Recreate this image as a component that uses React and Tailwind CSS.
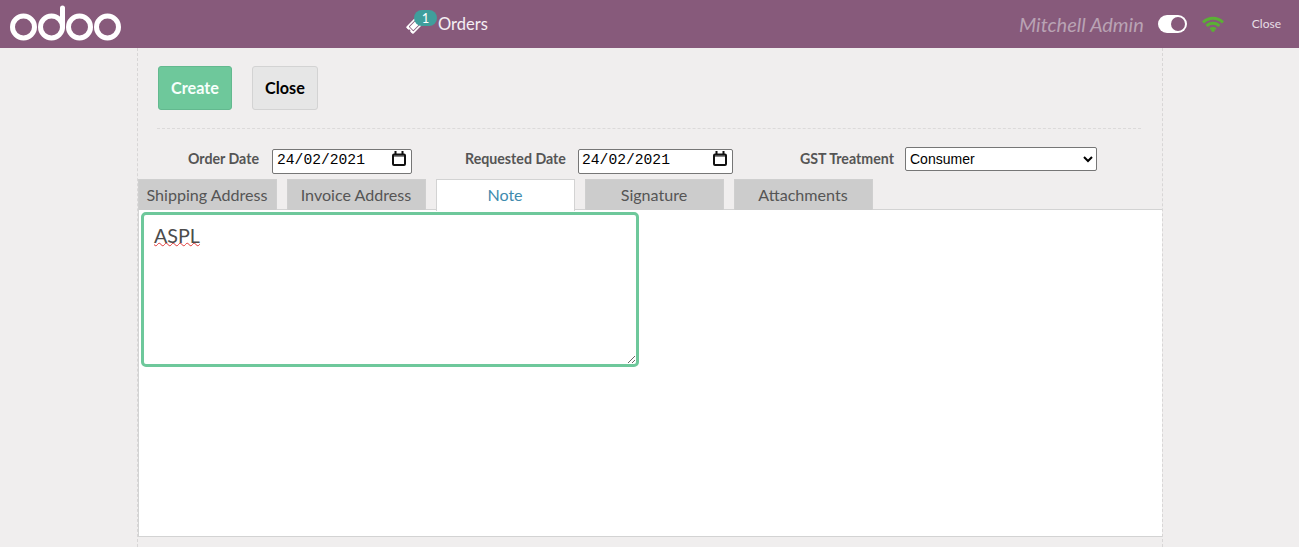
import React from "react";
import { FaTicketAlt } from "react-icons/fa";

function Logo() {
  return (
    <svg width="112" height="36" viewBox="0 0 112 36" fill="none" stroke="white" strokeWidth="5">
      <circle cx="13.5" cy="22" r="11" />
      <circle cx="41.5" cy="22" r="11" />
      <path d="M52.5 22V3" strokeLinecap="round" />
      <circle cx="69.5" cy="22" r="11" />
      <circle cx="97.5" cy="22" r="11" />
    </svg>
  );
}

function Wifi() {
  return (
    <svg className="ml-[15px] mt-[-1px]" width="22" height="16" viewBox="0 0 22 16" fill="none" stroke="#5bb035" strokeWidth="3">
      <path d="M1 6.5A14 14 0 0 1 21 6.5" />
      <path d="M4.6 10A9 9 0 0 1 17.4 10" />
      <path d="M8.2 13.2A4 4 0 0 1 13.8 13.2" strokeWidth="2" />
      <circle cx="11" cy="14.2" r="1.7" fill="#5bb035" stroke="none" />
    </svg>
  );
}

function DateField({ width, inputClass }) {
  return (
    <span className={"relative ml-[13px] block h-[25px] " + width}>
      <input
        type="text"
        readOnly
        value="24/02/2021"
        className={
          "h-full w-full rounded-[2px] border border-[#767676] bg-white pb-[2px] font-['Liberation_Mono',monospace] text-[14.67px] font-normal text-black outline-none " +
          inputClass
        }
      />
      <svg
        className="absolute right-[6px] top-[4px]"
        width="14"
        height="15"
        viewBox="0 0 14 15"
        fill="none"
        stroke="#111"
      >
        <rect x="1" y="3.5" width="12" height="10.5" rx="1" strokeWidth="2" />
        <path d="M1 5H13" strokeWidth="1" />
        <path d="M3.5 0V3M10.5 0V3" strokeWidth="2" />
      </svg>
    </span>
  );
}

const tabs = ["Shipping Address", "Invoice Address", "Note", "Signature", "Attachments"];

export default function App() {
  return (
    <div className="h-[547px] overflow-hidden bg-[#f0eeee] font-['Lato',sans-serif]">
      <header className="flex h-12 items-center bg-[#875a7b] text-white">
        <div className="ml-[10px] mt-[-2px] w-[112px]">
          <Logo />
        </div>
        <div className="relative ml-[285px] flex h-12 w-[81px] items-center">
          <FaTicketAlt className="mt-[2px] -rotate-45 text-[15px]" />
          <span className="absolute left-[7px] top-[10px] flex h-4 w-[23px] items-center justify-center rounded-full bg-[#3f9e9c] text-[13px] leading-none">
            1
          </span>
          <span className="absolute left-[31px] text-[16.5px] text-[#f5eff3]">Orders</span>
        </div>
        <span className="ml-auto text-[20px] italic text-[#b9a3b4]">Mitchell Admin</span>
        <span className="ml-[14px] flex h-[18px] w-[29px] items-center justify-end rounded-full bg-white pr-[2px]">
          <span className="h-[14px] w-[14px] rounded-full bg-[#875a7b]" />
        </span>
        <Wifi />
        <span className="ml-[28px] mr-[18px] text-[12px] text-[#e8dfe6]">Close</span>
      </header>

      <main className="ml-[137px] flex h-[499px] w-[1026px] flex-col border-x border-dashed border-[#d8d6d6]">
        <div className="flex gap-5 px-5 pt-[18px]">
          <button className="h-11 w-[74px] rounded-[3px] border border-[#63b98f] bg-[#6ec89b] pt-[1px] text-[16.2px] font-bold text-[#f7fffb]">
            Create
          </button>
          <button className="h-11 w-[66px] rounded-[3px] border border-[#d3d3d3] bg-[#e6e6e6] pt-[1px] text-[16.2px] font-bold text-black">
            Close
          </button>
        </div>
        <div className="ml-[19px] mt-[18px] w-[984px] border-t border-dashed border-[#dcdada]" />

        <div className="mt-[18px] flex h-[25px] items-start pl-[50px] text-[14.2px] font-bold leading-6 text-[#555]">
          <label className="w-[71px] whitespace-nowrap">Order Date</label>
          <DateField width="w-[140px]" inputClass="pl-[4px]" />
          <label className="ml-[53px] w-[100px] whitespace-nowrap">Requested Date</label>
          <DateField width="w-[155px]" inputClass="pl-[3px]" />
          <label className="ml-[67px] w-[95px] whitespace-nowrap">GST Treatment</label>
          <select className="ml-[10px] h-6 w-[192px] rounded-[2px] border border-[#767676] bg-white font-['Liberation_Sans',sans-serif] text-[14px] font-normal text-black">
            <option>Consumer</option>
          </select>
        </div>

        <div className="relative z-10 mt-[7px] flex h-[30px] gap-[10px]">
          {tabs.map((t) => (
            <div
              key={t}
              className={
                t === "Note"
                  ? "flex h-[32px] w-[139px] items-center justify-center border border-b-0 border-[#d3d3d3] bg-white pb-[1px] pr-[1px] text-[16.1px] text-[#3f8bae]"
                  : "flex h-[31px] w-[139px] items-center justify-center whitespace-nowrap border border-b-0 border-[#cfcfcf] bg-[#cccccc] pr-[1px] text-[16.1px] text-[#555]"
              }
            >
              {t}
            </div>
          ))}
        </div>

        <section className="h-[328px] border border-r-0 border-[#d3d3d3] bg-white pl-[2px] pt-[2px]">
          <textarea
            defaultValue="ASPL"
            spellCheck={false}
            className="block h-[155px] w-[498px] rounded-[5px] border-[3px] border-[#6ec89b] bg-white px-[10px] pb-[7px] pt-[9px] text-[19.7px] leading-6 text-[#4c4c4c] underline decoration-[#e03a3a] decoration-wavy decoration-1 underline-offset-[-1px] [text-decoration-skip-ink:none] outline-none"
          />
        </section>
      </main>
    </div>
  );
}
